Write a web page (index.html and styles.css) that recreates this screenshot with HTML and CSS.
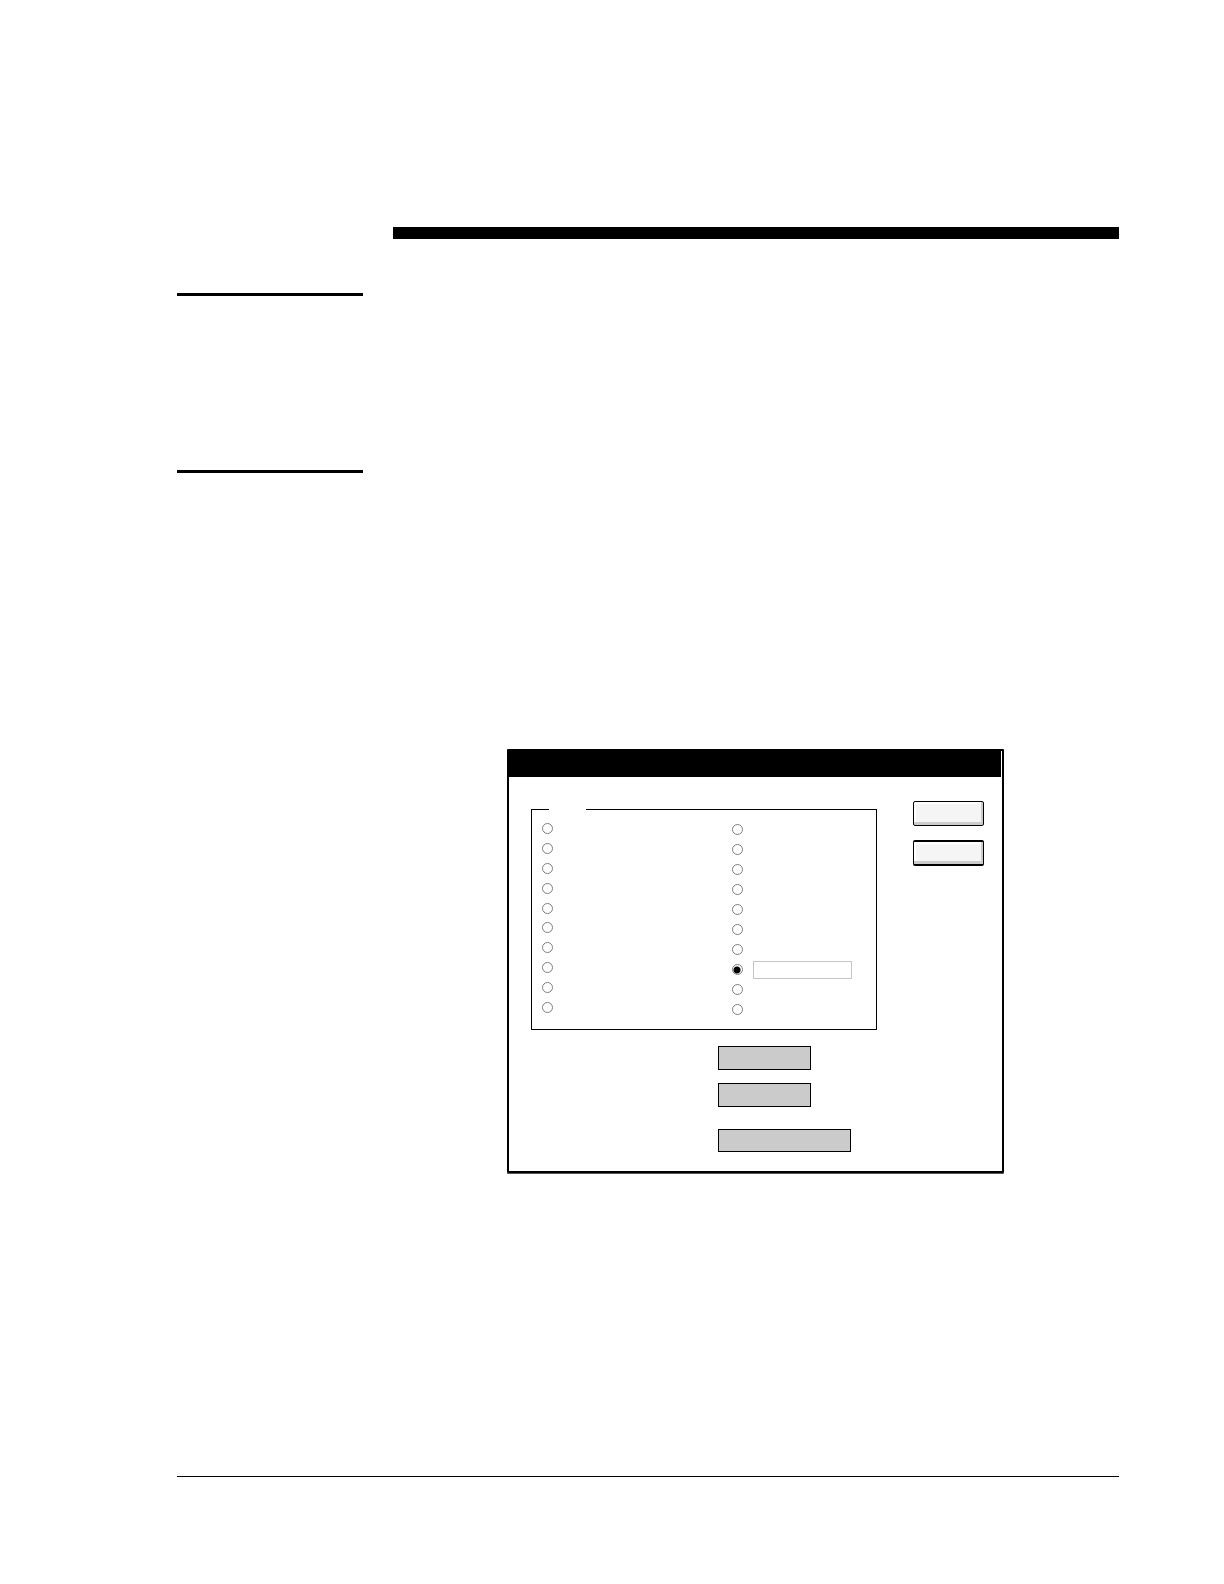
FILE: index.html
```html
<!DOCTYPE html>
<html lang="en">
<head>
    <meta charset="UTF-8">
    <meta name="viewport" content="width=device-width, initial-scale=1.0">
    <title>Dialog</title>
    <link rel="stylesheet" href="styles.css">
</head>
<body>
    <main class="page">
        <div class="title-rule"></div>

        <section class="section section-intro">
            <div class="side-rule"></div>
        </section>

        <section class="section">
            <div class="side-rule"></div>
            <form class="dialog">
                <div class="title-bar"></div>
                <div class="dialog-top">
                    <fieldset class="group">
                        <legend></legend>
                        <div class="column">
                            <div class="option"><input type="radio" name="choice" aria-label="Option 1"></div>
                            <div class="option"><input type="radio" name="choice" aria-label="Option 2"></div>
                            <div class="option"><input type="radio" name="choice" aria-label="Option 3"></div>
                            <div class="option"><input type="radio" name="choice" aria-label="Option 4"></div>
                            <div class="option"><input type="radio" name="choice" aria-label="Option 5"></div>
                            <div class="option"><input type="radio" name="choice" aria-label="Option 6"></div>
                            <div class="option"><input type="radio" name="choice" aria-label="Option 7"></div>
                            <div class="option"><input type="radio" name="choice" aria-label="Option 8"></div>
                            <div class="option"><input type="radio" name="choice" aria-label="Option 9"></div>
                            <div class="option"><input type="radio" name="choice" aria-label="Option 10"></div>
                        </div>
                        <div class="column column-right">
                            <div class="option"><input type="radio" name="choice" aria-label="Option 11"></div>
                            <div class="option"><input type="radio" name="choice" aria-label="Option 12"></div>
                            <div class="option"><input type="radio" name="choice" aria-label="Option 13"></div>
                            <div class="option"><input type="radio" name="choice" aria-label="Option 14"></div>
                            <div class="option"><input type="radio" name="choice" aria-label="Option 15"></div>
                            <div class="option"><input type="radio" name="choice" aria-label="Option 16"></div>
                            <div class="option"><input type="radio" name="choice" aria-label="Option 17"></div>
                            <div class="option">
                                <input type="radio" name="choice" aria-label="Option 18" checked>
                                <input type="text" class="option-text" aria-label="Option 18 value">
                            </div>
                            <div class="option"><input type="radio" name="choice" aria-label="Option 19"></div>
                            <div class="option"><input type="radio" name="choice" aria-label="Option 20"></div>
                        </div>
                    </fieldset>
                    <div class="actions">
                        <button type="submit" aria-label="OK"></button>
                        <button type="button" aria-label="Cancel"></button>
                    </div>
                </div>
                <div class="fields">
                    <input type="text" class="field" aria-label="First value">
                    <input type="text" class="field" aria-label="Second value">
                    <input type="text" class="field field-wide" aria-label="Third value">
                </div>
            </form>
        </section>

        <hr class="footer-rule">
    </main>
</body>
</html>
```

FILE: styles.css
```css
* {
    box-sizing: border-box;
}
body {
    margin: 0;
    background-color: #fff;
    font-family: "Liberation Sans", Arial, sans-serif;
    font-size: 12px;
}
.page {
    padding: 227px 105px 106px 177px;
}
.title-rule {
    height: 12px;
    margin: 0 0 54px 216px;
    background-color: #000;
}
/* narrow side column and a wide content column */
.section {
    display: grid;
    grid-template-columns: 186px 1fr;
    column-gap: 30px;
    align-items: start;
}
.section-intro {
    min-height: 177px;
}
.side-rule {
    height: 3px;
    background-color: #000;
}
.dialog {
    max-width: 497px;
    margin: 279px 0 0 114px;
    border: 2px solid #000;
    border-radius: 1px;
    box-shadow: 0 1px 0 #555;
}
.title-bar {
    height: 26px;
    margin-right: 1px;
    background-color: #000;
}
.dialog-top {
    display: flex;
    gap: 36px;
    padding: 24px 18px 0 22px;
}
.group {
    flex: 1;
    display: flex;
    min-width: 0;
    margin: 8px 0 0;
    padding: 13px 0 14px 10px;
    border: 1px solid #000;
}
.group legend {
    width: 37px;
    height: 1px;
    margin-left: 7px;
    padding: 0;
}
.column {
    display: flex;
    flex-direction: column;
    justify-content: space-between;
    width: 190px;
    height: 190px;
}
.column-right {
    flex: 1;
    height: 191px;
    margin-top: 1px;
}
.option {
    display: flex;
    align-items: center;
    gap: 10px;
    height: 11px;
}
.option input[type="radio"] {
    appearance: none;
    width: 11px;
    height: 11px;
    margin: 0;
    border: 1px solid #808080;
    border-radius: 50%;
    background-color: #fff;
}
.option input[type="radio"]:checked {
    background-image: radial-gradient(circle at 4px 5px, #000 3px, transparent 4px);
}
.option-text {
    width: 99px;
    height: 18px;
    padding: 0 4px;
    border: 1px solid #c4c4c4;
    background-color: #fff;
}
.actions {
    display: flex;
    flex-direction: column;
    gap: 14px;
}
.actions button {
    width: 71px;
    height: 25px;
    padding: 0;
    border: 1px solid #000;
    border-radius: 2px;
    background-color: #f5f5f5;
    box-shadow: inset -2px -3px 0 #ccc, inset 2px 2px 1px #fff;
}
.actions button + button {
    height: 26px;
    border-width: 2px 1px;
}
.fields {
    display: flex;
    flex-direction: column;
    gap: 13px;
    padding: 16px 18px 19px 209px;
}
.field {
    width: 93px;
    height: 24px;
    padding: 0 4px;
    border: 1px solid #000;
    background-color: #cbcbcb;
}
.field-wide {
    width: 133px;
    height: 23px;
    margin-top: 9px;
}
.footer-rule {
    height: 1px;
    margin: 303px 0 0;
    border: 0;
    background-color: #000;
}
```
